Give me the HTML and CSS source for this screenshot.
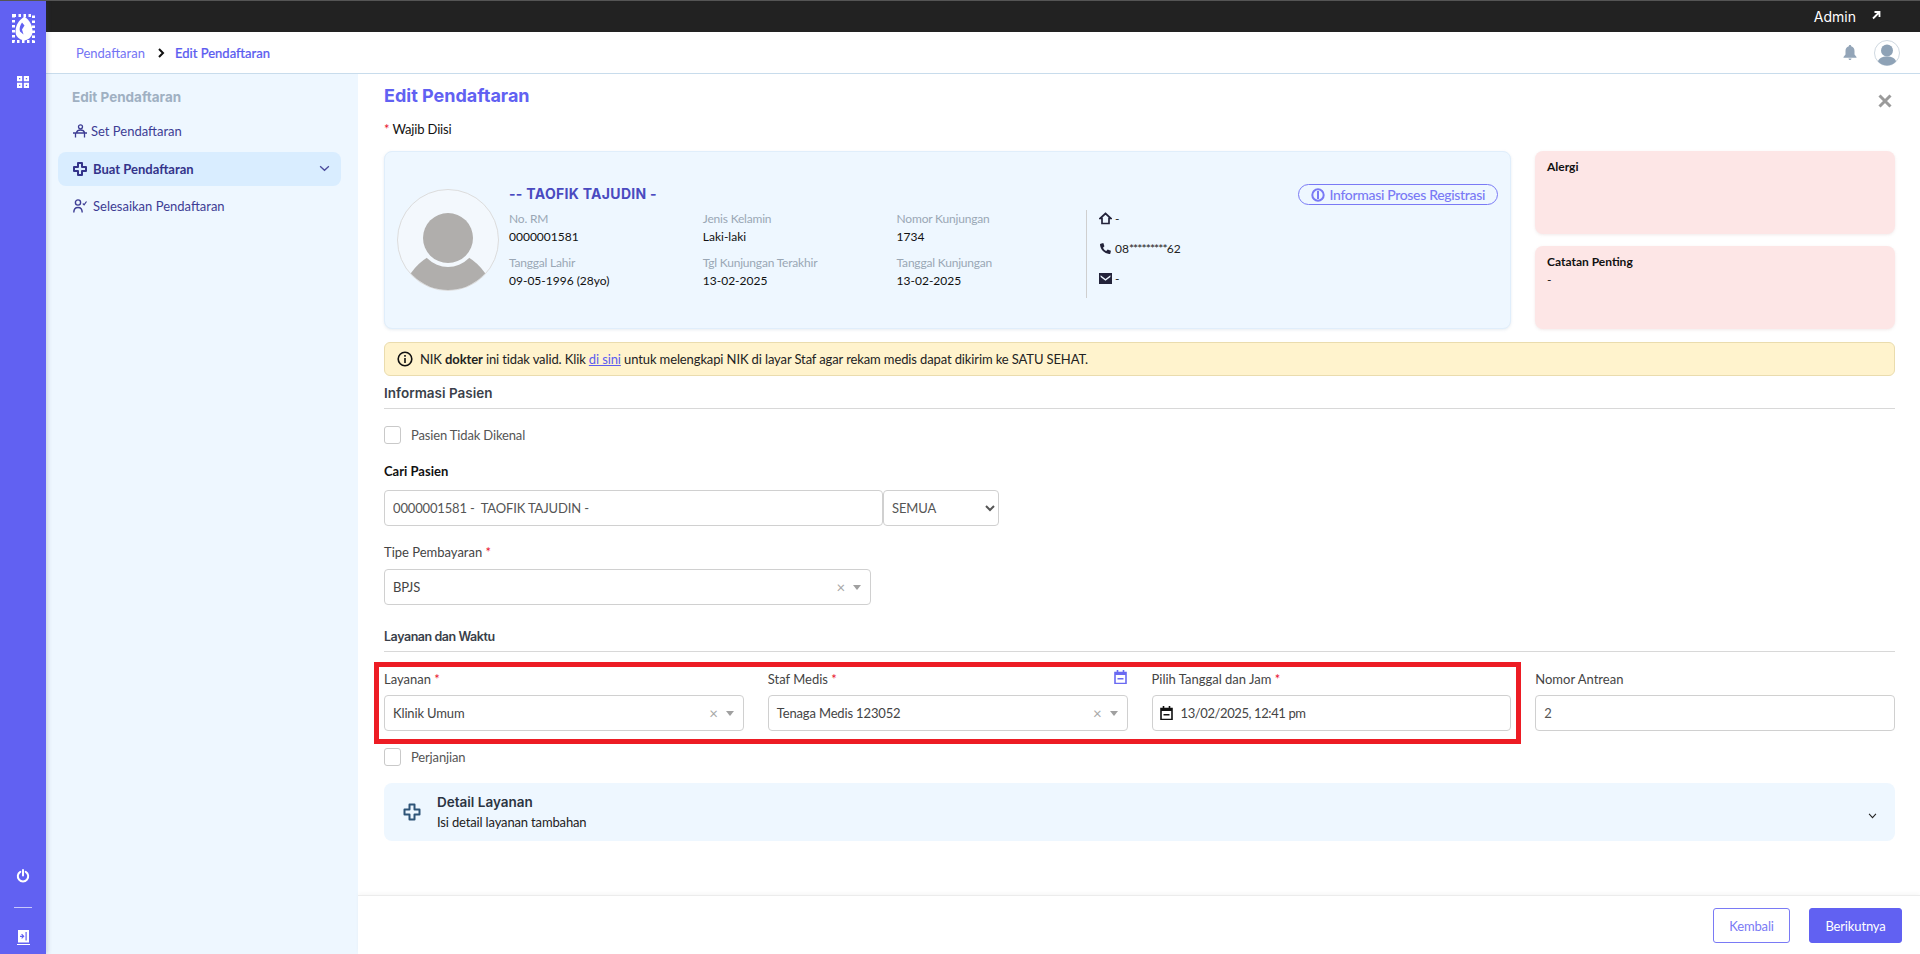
FILE: index.html
```html
<!DOCTYPE html>
<html lang="id">
<head>
<meta charset="utf-8">
<title>Edit Pendaftaran</title>
<link rel="stylesheet" href="styles.css">
</head>
<body>
<aside class="rail">
  <svg class="rail-logo" viewBox="0 0 23 29"><rect x="1.500" y="1.500" width="20" height="26" fill="none" stroke="#fff" stroke-width="3" stroke-dasharray="2.500 2.500"/><path d="M12.500 2.500C7 6 3.500 11 3.500 17.500c0 5 3.500 8 9 9 5-1 8-4.500 8-9 0-6-3-11.500-8-15z" fill="#fff"/><path d="M10 8.500c-2 3-3 6-2 9l3.500 3-1.500-5 2.500-4z" fill="#6161f2"/></svg>
  <svg class="rail-grid" viewBox="0 0 12 12"><path d="M0 0h5.200v5.200H0zM6.800 0H12v5.200H6.800zM0 6.800h5.200V12H0zM6.800 6.800H12V12H6.800z" fill="#fff"/><path d="M2 2h1.300v1.300H2zM8.800 2h1.300v1.300H8.800zM2 8.800h1.300v1.300H2zM8.800 8.800h1.300v1.300H8.800z" fill="#6161f2"/></svg>
  <div class="rail-spacer"></div>
  <svg class="rail-power" viewBox="0 0 14 14"><path d="M4.300 2.800a5.200 5.200 0 1 0 5.400 0" fill="none" stroke="#fff" stroke-width="2" stroke-linecap="round"/><path d="M7 1v5.500" stroke="#fff" stroke-width="2" stroke-linecap="round"/></svg>
  <div class="rail-rule"></div>
  <svg class="rail-book" viewBox="0 0 13 15"><path d="M1 0h11v12.500H1z" fill="#fff"/><path d="M0 14h13v1H0z" fill="#fff"/><path d="M8.500 2v8.500h1.200V2zM3 5.700h2.300L4.200 4.500l.8-.7 2.500 2.500L5 8.800l-.8-.7 1.200-1.200H3z" fill="#6161f2"/></svg>
</aside>
<div class="shell">
  <header class="topbar">
    <span class="topbar-user">Admin</span>
    <svg class="topbar-arrow" viewBox="0 0 10 10"><path d="M2 8.500 8 2.500M3.500 2H8.500V7" fill="none" stroke="#fff" stroke-width="1.800"/></svg>
  </header>
  <nav class="crumbs">
    <span class="crumb">Pendaftaran</span>
    <svg class="crumb-sep" viewBox="0 0 8 10"><path d="M2 1l4 4-4 4" fill="none" stroke="#111" stroke-width="2"/></svg>
    <span class="crumb crumb-current">Edit Pendaftaran</span>
    <div class="crumbs-spacer"></div>
    <svg class="bell" viewBox="0 0 14 15"><path d="M7 0c.8 0 1.200.5 1.200 1.200C10.400 1.800 11.500 3.600 11.500 6v3.500L13.500 12v.7H.5V12l2-2.500V6c0-2.400 1.100-4.200 3.300-4.800C5.800.5 6.200 0 7 0zM5.500 13.500h3C8.500 14.400 7.800 15 7 15s-1.500-.6-1.500-1.500z" fill="#93a5b8"/></svg>
    <svg class="user-avatar" viewBox="0 0 26 26"><circle cx="13" cy="13" r="12.500" fill="#fff" stroke="#cfd8e0"/><circle cx="13" cy="10.500" r="6" fill="#8ea2b6"/><path d="M4 21.500c1-3.500 4-5 9-5s8 1.500 9 5c-2.300 2.400-5.500 4-9 4s-6.700-1.600-9-4z" fill="#8ea2b6"/></svg>
  </nav>
  <div class="body-row">
    <aside class="sidebar">
      <div class="side-title">Edit Pendaftaran</div>
      <div class="side-item side-first">
        <svg class="side-icon" viewBox="0 0 14 14"><circle cx="7.500" cy="2.800" r="2" fill="none" stroke="#3d3d94" stroke-width="1.300"/><path d="M3.500 8.500C4 6.500 5.500 6 7.500 6s3.500.5 4 2.500M0 9h14M2.500 9v4.500M11.500 9v4.500" fill="none" stroke="#3d3d94" stroke-width="1.300"/></svg>
        <span>Set Pendaftaran</span>
      </div>
      <div class="side-item side-active">
        <svg class="side-icon side-plus" viewBox="0 0 14 14"><path d="M5 1h4v4h4v4H9v4H5V9H1V5h4z" fill="none" stroke="#33338a" stroke-width="2" stroke-linejoin="round"/></svg>
        <span class="side-grow">Buat Pendaftaran</span>
        <svg class="side-chev" viewBox="0 0 12 8"><path d="M1 1.500l5 4.500 5-4.500" fill="none" stroke="#4a4a9c" stroke-width="1.500"/></svg>
      </div>
      <div class="side-item">
        <svg class="side-icon side-plus" viewBox="0 0 14 14"><circle cx="5" cy="3.500" r="2.600" fill="none" stroke="#3d3d94" stroke-width="1.400"/><path d="M.8 13.500c0-3.500 1.800-5 4.200-5s4.200 1.500 4.200 5" fill="none" stroke="#3d3d94" stroke-width="1.400"/><path d="M9.800 4.500l1.300 1.300L13.500 2.500" fill="none" stroke="#3d3d94" stroke-width="1.200"/></svg>
        <span>Selesaikan Pendaftaran</span>
      </div>
    </aside>
    <main class="main">
      <div class="content">
        <svg class="close" viewBox="0 0 14 14"><path d="M1.500 1.500l11 11M12.500 1.500l-11 11" stroke="#9a9a9a" stroke-width="3"/></svg>
        <h1 class="page-title">Edit Pendaftaran</h1>
        <p class="required-note"><span class="star">*</span> Wajib Diisi</p>
        <section class="summary-grid">
          <div class="patient-card">
            <svg class="patient-photo" viewBox="0 0 102 102"><defs><clipPath id="pc"><circle cx="51" cy="51" r="50"/></clipPath></defs><circle cx="51" cy="51" r="50.500" fill="#f3f8fd" stroke="#dcdcdc"/><g clip-path="url(#pc)"><path d="M14 84q7-10 17-16H71q10 6 17 16v18H14z" fill="#b0aeac"/><circle cx="51" cy="49" r="29" fill="#f3f8fd"/></g><circle cx="51" cy="49" r="25" fill="#b0aeac"/></svg>
            <div class="patient-info">
              <div class="patient-name">-- TAOFIK TAJUDIN -</div>
              <div class="patient-fields">
                <div class="pf"><span class="pf-label">No. RM</span><span class="pf-value">0000001581</span></div>
                <div class="pf"><span class="pf-label">Jenis Kelamin</span><span class="pf-value">Laki-laki</span></div>
                <div class="pf"><span class="pf-label">Nomor Kunjungan</span><span class="pf-value">1734</span></div>
                <div class="pf"><span class="pf-label">Tanggal Lahir</span><span class="pf-value">09-05-1996 (28yo)</span></div>
                <div class="pf"><span class="pf-label">Tgl Kunjungan Terakhir</span><span class="pf-value">13-02-2025</span></div>
                <div class="pf"><span class="pf-label">Tanggal Kunjungan</span><span class="pf-value">13-02-2025</span></div>
              </div>
            </div>
            <div class="contacts">
              <div class="contact"><svg class="contact-icon" viewBox="0 0 13 13"><path d="M6.500 1.500L1 6.500H3v5h7v-5h2z" fill="none" stroke="#23233a" stroke-width="1.700"/></svg><span>-</span></div>
              <div class="contact"><svg class="contact-icon" viewBox="0 0 12 12"><path d="M1.500 1.500L4 1l1 3-1.300 1.200c.6 1.300 1.600 2.400 3 3L8 7l3 1-.5 2.500c-.2.500-.6.700-1.100.6C4.800 10.600 1.500 7.200.9 2.600c-.1-.5.100-.9.600-1.100z" fill="#23233a"/></svg><span>08<span class="mask">*********</span>62</span></div>
              <div class="contact"><svg class="contact-icon" viewBox="0 0 12 10"><path d="M0 0h12v10H0zM1.500 2L6 5.500 10.500 2v1.500L6 7 1.500 3.500z" fill="#23233a" fill-rule="evenodd"/></svg><span>-</span></div>
            </div>
            <button class="reg-info" type="button"><svg class="reg-icon" viewBox="0 0 14 14"><circle cx="7" cy="7" r="5.700" fill="none" stroke="#7a7af5" stroke-width="2"/><path d="M6 3h2v8H6z" fill="#7a7af5"/></svg>Informasi Proses Registrasi</button>
          </div>
          <div class="note-card"><strong>Alergi</strong></div>
          <div class="note-card"><strong>Catatan Penting</strong><span>-</span></div>
        </section>
        <div class="alert">
          <svg class="alert-icon" viewBox="0 0 16 16"><circle cx="8" cy="8" r="6.800" fill="none" stroke="#111" stroke-width="1.600"/><path d="M7.200 7h1.600v5H7.200zM7.200 4h1.600v1.700H7.200z" fill="#111"/></svg>
          <span>NIK <b>dokter</b> ini tidak valid. Klik <a class="alert-link" href="#">di sini</a> untuk melengkapi NIK di layar Staf agar rekam medis dapat dikirim ke SATU SEHAT.</span>
        </div>
        <h2 class="section-title section-first">Informasi Pasien</h2>
        <label class="check-row check-first"><span class="checkbox"></span><span>Pasien Tidak Dikenal</span></label>
        <div class="field-label label-strong label-search">Cari Pasien</div>
        <div class="search-row">
          <input class="input search-input" value="0000001581 -  TAOFIK TAJUDIN -">
          <select class="input search-select"><option>SEMUA</option></select>
        </div>
        <div class="field-label label-pay">Tipe Pembayaran <span class="star">*</span></div>
        <div class="pseudo-select pay-select">
          <span class="grow">BPJS</span><span class="clear">×</span><span class="caret"></span>
        </div>
        <h2 class="section-title section-second">Layanan dan Waktu</h2>
        <div class="service-grid">
          <div class="red-box"></div>
          <div class="service-field">
            <div class="field-label">Layanan <span class="star">*</span></div>
            <div class="pseudo-select"><span class="grow">Klinik Umum</span><span class="clear">×</span><span class="caret"></span></div>
          </div>
          <div class="service-field">
            <div class="field-label label-flex"><span class="grow">Staf Medis <span class="star">*</span></span>
              <svg class="sched-icon" viewBox="0 0 13 14"><path d="M1 2.500h11v11H1z" fill="none" stroke="#6a6af2" stroke-width="1.600"/><path d="M3.500 0v3M9.500 0v3" stroke="#6a6af2" stroke-width="1.600"/><path d="M1 2.500h11V5H1zM3.500 8h6v1.500h-6z" fill="#6a6af2"/></svg></div>
            <div class="pseudo-select"><span class="grow">Tenaga Medis 123052</span><span class="clear">×</span><span class="caret"></span></div>
          </div>
          <div class="service-field">
            <div class="field-label">Pilih Tanggal dan Jam <span class="star">*</span></div>
            <div class="pseudo-select date-box">
              <svg class="date-icon" viewBox="0 0 13 14"><path d="M1 2.500h11v11H1z" fill="none" stroke="#111" stroke-width="1.600"/><path d="M3.500 0v3M9.500 0v3" stroke="#111" stroke-width="1.600"/><path d="M1 2.500h11V5H1zM3.500 8h6v1.500h-6z" fill="#111"/></svg>
              <span class="date-text">13/02/2025, 12:41 pm</span>
            </div>
          </div>
          <div class="service-field">
            <div class="field-label">Nomor Antrean</div>
            <input class="input queue-input" value="2">
          </div>
        </div>
        <label class="check-row check-second"><span class="checkbox"></span><span>Perjanjian</span></label>
        <div class="detail-panel">
          <svg class="detail-icon" viewBox="0 0 18 18"><path d="M6.500 1.500h5v5h5v5h-5v5h-5v-5h-5v-5h5z" fill="none" stroke="#2f5578" stroke-width="2" stroke-linejoin="round"/></svg>
          <div class="grow">
            <div class="detail-title">Detail Layanan</div>
            <div class="detail-sub">Isi detail layanan tambahan</div>
          </div>
          <svg class="detail-chev" viewBox="0 0 10 7"><path d="M1 1l4 4.500L9 1" fill="none" stroke="#222" stroke-width="1.200"/></svg>
        </div>
      </div>
      <footer class="footer">
        <button class="btn btn-outline" type="button">Kembali</button>
        <button class="btn btn-solid" type="button">Berikutnya</button>
      </footer>
    </main>
  </div>
</div>
</body>
</html>
```

FILE: styles.css
```css
* { box-sizing: border-box; }
html, body { height: 100%; }
body {
  margin: 0;
  height: 954px;
  overflow: hidden;
  display: flex;
  border-top: 1px solid #555;
  font-family: "Lato", "Liberation Sans", sans-serif;
  font-size: 13px;
  letter-spacing: -.15px;
  color: #444;
  background: #fff;
}
svg { display: block; flex: none; }

.rail {
  width: 46px;
  flex: none;
  background: #6161f2;
  display: flex;
  flex-direction: column;
  align-items: center;
  position: relative;
  z-index: 2;
  box-shadow: 2px 0 4px rgba(60, 70, 110, .18);
}
.rail-logo { width: 23px; height: 29px; margin-top: 13px; }
.rail-grid { width: 12px; height: 12px; margin-top: 33px; }
.rail-spacer { flex: 1; }
.rail-power { width: 14px; height: 14px; }
.rail-rule { width: 18px; height: 1px; background: rgba(255, 255, 255, .65); margin-top: 24px; }
.rail-book { width: 13px; height: 15px; margin-top: 22px; margin-bottom: 9px; }

.shell { flex: 1; min-width: 0; display: flex; flex-direction: column; }

.topbar {
  height: 31px;
  flex: none;
  background: #222;
  display: flex;
  align-items: center;
  justify-content: flex-end;
  padding-right: 39px;
  color: #fff;
  font-family: "Inter", "Liberation Sans", sans-serif;
  font-size: 14px;
  letter-spacing: 0;
}
.topbar-arrow { width: 10px; height: 10px; margin-left: 15px; margin-top: -3px; }

.crumbs {
  height: 42px;
  flex: none;
  display: flex;
  align-items: center;
  padding: 0 20px 0 30px;
  background: #fff;
  border-bottom: 1px solid #c8dcec;
  font-size: 13px;
  letter-spacing: 0;
  color: #7373f4;
}
.crumb-sep { width: 8px; height: 10px; margin: 0 10px 0 12px; }
.crumb-current { color: #5c5cf0; font-weight: 500; -webkit-text-stroke: .2px #5c5cf0; }
.crumbs-spacer { flex: 1; }
.bell { width: 14px; height: 15px; margin-right: 17px; }
.user-avatar { width: 26px; height: 26px; }

.body-row { flex: 1; min-height: 0; display: flex; }

.sidebar {
  width: 312px;
  flex: none;
  background: #eef7ff;
  padding: 12px 17px 0 12px;
  color: #3d3d94;
  font-size: 13px;
  letter-spacing: 0;
}
.side-title {
  padding-left: 14px;
  font-family: "Inter", "Liberation Sans", sans-serif;
  font-weight: 700;
  font-size: 13.500px;
  line-height: 22px;
  color: #9fb0c2;
}
.side-item { display: flex; align-items: center; height: 34px; padding: 0 11px 1px 15px; border-radius: 8px; margin-bottom: 3px; }
.side-first { margin-top: 6px; margin-bottom: 4px; }
.side-active { background: #d9edff; color: #33338a; font-weight: 700; }
.side-icon { width: 14px; height: 14px; margin-right: 4px; }
.side-plus { margin-right: 6px; }
.side-grow { flex: 1; }
.side-chev { width: 11px; height: 7px; }

.main { flex: 1; min-width: 0; display: flex; flex-direction: column; background: #fff; }
.content { flex: 1; min-height: 0; padding: 10px 25px 0 26px; position: relative; }
.close { position: absolute; right: 28px; top: 20px; width: 14px; height: 14px; }

.page-title {
  margin: 0;
  font-family: "Inter", "Liberation Sans", sans-serif;
  font-weight: 700;
  font-size: 18px;
  line-height: 24px;
  letter-spacing: 0;
  color: #6161f2;
}
.required-note { margin: 11px 0 0; line-height: 20px; color: #111; }
.star { color: #e8112d; }

.summary-grid {
  margin-top: 12px;
  display: grid;
  grid-template-columns: 1fr 360px;
  grid-template-rows: 83px 83px;
  gap: 12px 24px;
}
.patient-card {
  grid-row: 1 / 3;
  background: #eef7ff;
  border: 1px solid #e0eefb;
  border-radius: 8px;
  box-shadow: 0 1px 3px rgba(120, 150, 180, .18);
  display: flex;
  position: relative;
  padding: 37px 0 0 12px;
}
.patient-photo { width: 102px; height: 102px; }
.patient-info { margin-left: 10px; width: 577px; }
.patient-name {
  font-family: "Inter", "Liberation Sans", sans-serif;
  font-weight: 700;
  font-size: 14px;
  line-height: 20px;
  color: #4a4ac0;
  letter-spacing: .3px;
  margin-top: -5px;
}
.patient-fields { display: grid; grid-template-columns: repeat(3, 193.800px); row-gap: 8px; margin-top: 6px; }
.pf { display: flex; flex-direction: column; }
.pf-label { font-size: 12px; line-height: 18px; color: #9aa7b5; letter-spacing: -.2px; }
.pf-value { font-size: 12px; line-height: 18px; color: #111; letter-spacing: 0; }
.contacts {
  margin-top: 21px;
  height: 88px;
  padding-left: 12px;
  border-left: 1px solid #cfcfcf;
  display: flex;
  flex-direction: column;
  gap: 14px;
  font-size: 12px;
  letter-spacing: 0;
  color: #222;
}
.contact { display: flex; align-items: center; gap: 3px; height: 16px; }
.contact-icon { width: 13px; height: 13px; }
.mask { letter-spacing: -.9px; }
.reg-info {
  position: absolute;
  right: 12px;
  top: 32px;
  height: 21px;
  padding: 0 12px;
  border: 1px solid #7a7af5;
  border-radius: 11px;
  background: transparent;
  display: flex;
  align-items: center;
  gap: 4px;
  font-family: inherit;
  font-size: 14px;
  font-weight: 500;
  letter-spacing: -.33px;
  color: #7a7af5;
}
.reg-icon { width: 14px; height: 14px; }
.note-card {
  background: #fde6e6;
  border-radius: 8px;
  box-shadow: 0 1px 3px rgba(180, 140, 140, .18);
  padding: 8px 12px;
  display: flex;
  flex-direction: column;
  gap: 3px;
  font-size: 12px;
  letter-spacing: 0;
  color: #111;
}

.alert {
  margin-top: 13px;
  height: 34px;
  display: flex;
  align-items: center;
  gap: 7px;
  padding-left: 12px;
  background: #fff3cd;
  border: 1px solid #eadcae;
  border-radius: 6px;
  color: #222;
  font-size: 13px;
  letter-spacing: -.12px;
}
.alert-icon { width: 16px; height: 16px; }
.alert-link { color: #5c5cf0; }

.section-title {
  margin: 0;
  padding-bottom: 4px;
  height: 27px;
  border-bottom: 1px solid #d8d8d8;
  font-family: "Inter", "Liberation Sans", sans-serif;
  font-weight: 600;
  font-size: 13.500px;
  line-height: 22px;
  letter-spacing: 0;
  color: #3a3f4a;
}
.section-first { margin-top: 6px; }
.section-second { margin-top: 20px; font-size: 12.500px; letter-spacing: -.45px; line-height: 23px; }

.check-row { display: flex; align-items: center; gap: 10px; height: 18px; color: #555; }
.check-first { margin-top: 17px; }
.check-second { margin-top: 17px; }
.checkbox { width: 17px; height: 18px; background: #fff; border: 1px solid #c9c9c9; border-radius: 3px; }

.field-label { line-height: 20px; color: #444; letter-spacing: 0; }
.label-strong { color: #111; font-weight: 700; }
.label-search { margin-top: 17px; }
.label-pay { margin-top: 16px; }
.label-flex { display: flex; align-items: center; }
.grow { flex: 1; min-width: 0; }

.input {
  height: 36px;
  border: 1px solid #d0d0d0;
  border-radius: 4px;
  background: #fff;
  font-family: inherit;
  font-size: 13px;
  letter-spacing: inherit;
  color: #555;
  padding: 0 8px;
}
.search-row { display: flex; margin-top: 9px; }
.search-input { width: 499px; }
.search-select { width: 116px; padding: 0 4px; }

.pseudo-select {
  height: 36px;
  display: flex;
  align-items: center;
  border: 1px solid #d0d0d0;
  border-radius: 4px;
  padding: 0 9px 0 8px;
  background: #fff;
  color: #444;
}
.pay-select { margin-top: 7px; width: 487px; }
.clear { color: #a8a8a8; font-size: 15px; margin-right: 8px; }
.caret { width: 0; height: 0; border: 4px solid transparent; border-top: 5px solid #a0a0a0; border-bottom: 0; }

.service-grid {
  position: relative;
  margin-top: 17px;
  display: grid;
  grid-template-columns: repeat(4, 1fr);
  gap: 24px;
}
.service-field .pseudo-select, .service-field .input { margin-top: 6px; width: 100%; }
.red-box {
  position: absolute;
  left: -10px;
  top: -7px;
  width: 1147px;
  height: 82px;
  border: 5px solid #ed1c24;
  pointer-events: none;
  z-index: 1;
}
.sched-icon { width: 13px; height: 14px; margin-right: 1px; margin-top: -4px; }
.date-box { gap: 8px; padding: 0 7px; }
.date-icon { width: 13px; height: 14px; }
.date-text { letter-spacing: -.4px; }

.detail-panel {
  margin-top: 17px;
  height: 58px;
  display: flex;
  align-items: center;
  background: #eef7ff;
  border-radius: 8px;
  padding: 0 18px 0 19px;
}
.detail-icon { width: 18px; height: 18px; margin-right: 16px; }
.detail-title {
  font-family: "Inter", "Liberation Sans", sans-serif;
  font-weight: 600;
  font-size: 13.500px;
  line-height: 20px;
  letter-spacing: 0;
  color: #2b3442;
}
.detail-sub { line-height: 20px; color: #222; }
.detail-chev { width: 9px; height: 6px; margin-top: 8px; }

.footer {
  height: 59px;
  flex: none;
  display: flex;
  justify-content: flex-end;
  gap: 19px;
  padding: 12px 18px 0 0;
  border-top: 1px solid #ececec;
  box-shadow: 0 -2px 4px rgba(0, 0, 0, .03);
}
.btn { height: 35px; border-radius: 3px; font-family: inherit; font-size: 13px; letter-spacing: inherit; }
.btn-outline { width: 77px; background: #fff; border: 1px solid #7a7af5; color: #7a7af5; }
.btn-solid { width: 93px; background: #6161f2; border: 1px solid #6161f2; color: #fff; }
```
